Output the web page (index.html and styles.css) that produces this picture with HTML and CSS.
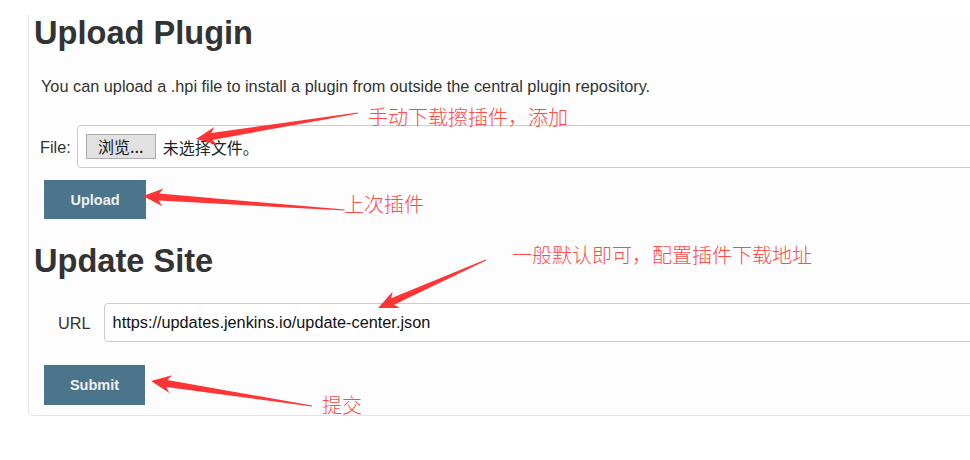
FILE: index.html
```html
<!DOCTYPE html>
<html lang="en">
<head>
<meta charset="utf-8">
<title>Plugin Manager - Advanced</title>
<link rel="stylesheet" href="styles.css">
</head>
<body>
<div class="panel">
  <h2 class="section-title">Upload Plugin</h2>
  <p class="desc">You can upload a .hpi file to install a plugin from outside the central plugin repository.</p>
  <div class="file-row">
    <span class="label">File:</span>
    <div class="file-box">
      <span class="browse">浏览...</span>
      <span class="no-file">未选择文件。</span>
    </div>
  </div>
  <button class="btn btn-upload" type="button">Upload</button>

  <h2 class="section-title section-title--second">Update Site</h2>
  <div class="url-row">
    <span class="label">URL</span>
    <input class="url-input" type="text" value="https://updates.jenkins.io/update-center.json">
  </div>
  <button class="btn btn-submit" type="button">Submit</button>
</div>

<div class="notes">
  <svg class="arrows" width="970" height="460" viewBox="0 0 970 460">
    <g fill="#ff3535">
      <polygon transform="translate(196,139) rotate(-9.12)" points="0,0 20,-9 16,-3.5 164,-0.5 164,0.5 16,3.5 20,9"/>
      <polygon transform="translate(143,196) rotate(3.96)" points="0,0 20,-9 16,-3.5 202,-0.5 202,0.5 16,3.5 20,9"/>
      <polygon transform="translate(378,308) rotate(-23.96)" points="0,0 20,-9 16,-3.5 118,-0.5 118,0.5 16,3.5 20,9"/>
      <polygon transform="translate(151,381) rotate(8.83)" points="0,0 20,-9 16,-3.5 163,-0.5 163,0.5 16,3.5 20,9"/>
    </g>
  </svg>
  <span class="note note-1">手动下载擦插件，添加</span>
  <span class="note note-2">上次插件</span>
  <span class="note note-3">一般默认即可，配置插件下载地址</span>
  <span class="note note-4">提交</span>
</div>
</body>
</html>
```
FILE: styles.css
```css
html, body {
  margin: 0;
  padding: 0;
  background: #ffffff;
}

body {
  width: 970px;
  height: 460px;
  overflow: hidden;
  position: relative;
  font-family: "Liberation Sans", Arial, sans-serif;
  color: #333333;
}

.panel {
  margin-left: 28px;
  width: 1100px;
  padding: 0 0 10px 4px;
  background: #fdfdfd;
  border-left: 1px solid #e4e4e4;
  border-bottom: 1px solid #e4e4e4;
  border-bottom-left-radius: 5px;
}

.section-title {
  margin: 15px 0 0 1px;
  font-size: 32.6px;
  line-height: 36px;
  font-weight: bold;
  color: #333333;
}

.section-title--second {
  margin-top: 24px;
}

.desc {
  margin: 26px 0 0 8px;
  font-size: 16.3px;
  line-height: 18px;
}

.label {
  font-size: 16.3px;
  line-height: 18px;
  color: #333333;
}

.file-row {
  display: flex;
  align-items: center;
  gap: 6px;
  margin: 30px 0 0 7px;
}

.file-box {
  flex: 1;
  display: flex;
  align-items: center;
  gap: 7px;
  padding: 8px;
  background: #ffffff;
  border: 1px solid #cccccc;
  border-radius: 4px;
}

.browse {
  box-sizing: border-box;
  width: 70px;
  height: 25px;
  line-height: 23px;
  text-align: center;
  background: #e1e1e1;
  border: 1px solid #adadad;
  font-family: "Noto Sans CJK SC", sans-serif;
  font-size: 16px;
  color: #111111;
}

.no-file {
  font-family: "Noto Sans CJK SC", sans-serif;
  font-size: 16px;
  color: #222222;
}

.btn {
  display: block;
  margin-left: 11px;
  border: none;
  background: #4b758b;
  color: #f0f0f0;
  font-family: "Liberation Sans", Arial, sans-serif;
  font-weight: bold;
  font-size: 14.5px;
  padding: 0;
}

.btn-upload {
  margin-top: 12px;
  width: 102px;
  height: 39px;
}

.btn-submit {
  margin-top: 23px;
  width: 101px;
  height: 40px;
}

.url-row {
  display: flex;
  align-items: center;
  gap: 13px;
  margin-top: 24px;
  padding-left: 25px;
}

.url-input {
  flex: 1;
  box-sizing: border-box;
  height: 39px;
  margin: 0;
  padding: 0 8px;
  border: 1px solid #cccccc;
  border-radius: 4px;
  background: #ffffff;
  font-family: "Liberation Sans", Arial, sans-serif;
  font-size: 16.3px;
  color: #111111;
  outline: none;
}

.notes {
  position: absolute;
  top: 0;
  left: 0;
  width: 970px;
  height: 460px;
  pointer-events: none;
}

.arrows {
  position: absolute;
  top: 0;
  left: 0;
}

.note {
  position: absolute;
  font-family: "Noto Sans CJK SC", sans-serif;
  font-weight: 300;
  font-size: 20px;
  line-height: 20px;
  color: #ff4a4a;
  white-space: nowrap;
}

.note-1 { left: 368px; top: 107px; }
.note-2 { left: 344px; top: 194px; }
.note-3 { left: 512px; top: 245px; }
.note-4 { left: 322px; top: 395px; }
```
